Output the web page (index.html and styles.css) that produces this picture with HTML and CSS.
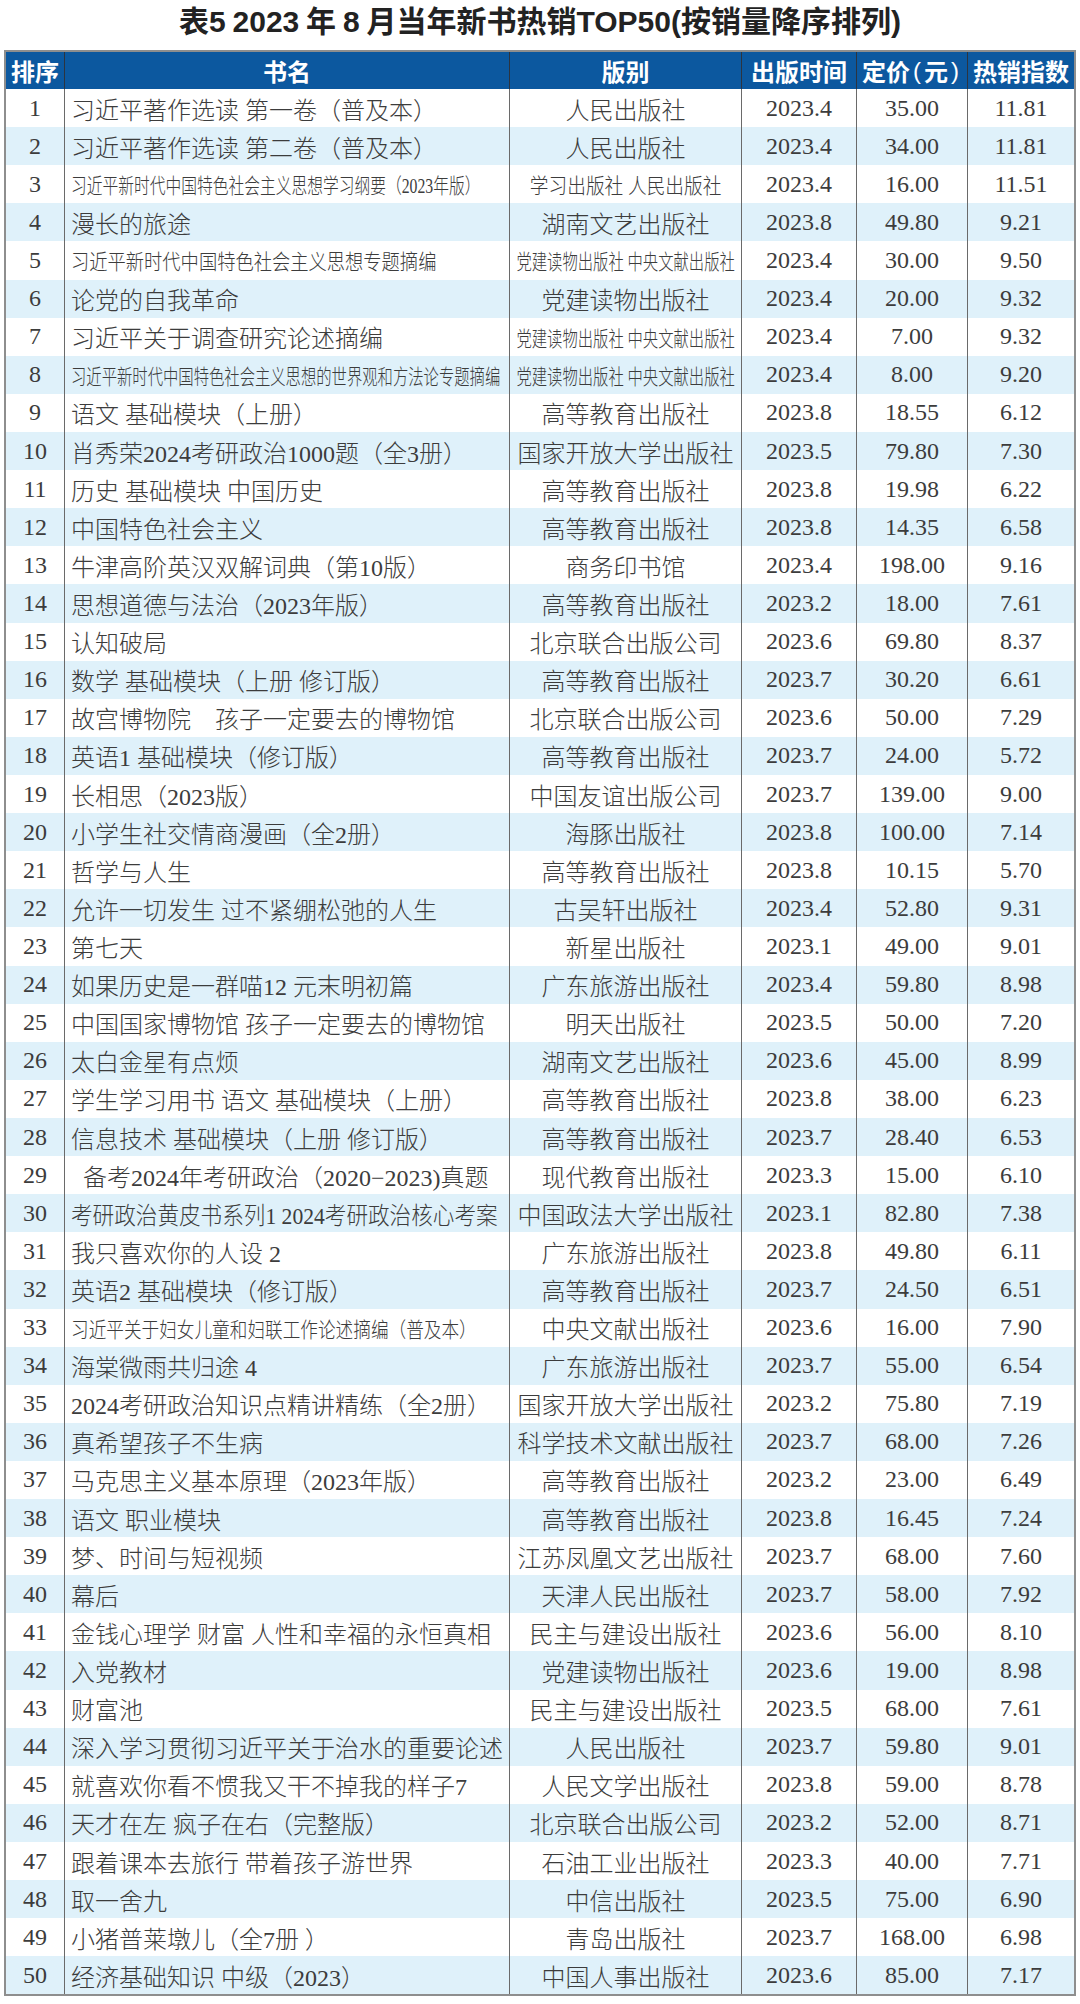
FILE: index.html
```html
<!DOCTYPE html>
<html lang="zh-CN">
<head>
<meta charset="utf-8">
<title>表5 2023年8月当年新书热销TOP50</title>
<link rel="stylesheet" href="styles.css">
</head>
<body>
<div class="title"><span class="ttxt">表<span class="lat">5</span> <span class="lat">2023</span> 年 <span class="lat">8</span> 月当年新书热销<span class="lat">TOP50(</span>按销量降序排列<span class="lat">)</span></span></div>
<div class="tbl">
  <div class="row hd"><div class="c">排序</div><div class="c">书名</div><div class="c">版别</div><div class="c">出版时间</div><div class="c">定价<span class="par">(</span>元<span class="par">)</span></div><div class="c">热销指数</div></div>
  <div class="row"><div class="c">1</div><div class="c name">习近平著作选读 第一卷（普及本）</div><div class="c">人民出版社</div><div class="c">2023.4</div><div class="c">35.00</div><div class="c">11.81</div></div>
  <div class="row alt"><div class="c">2</div><div class="c name">习近平著作选读 第二卷（普及本）</div><div class="c">人民出版社</div><div class="c">2023.4</div><div class="c">34.00</div><div class="c">11.81</div></div>
  <div class="row"><div class="c">3</div><div class="c name"><span class="sq k74 ol">习近平新时代中国特色社会主义思想学习纲要（2023年版）</span></div><div class="c"><span class="sq k89">学习出版社 人民出版社</span></div><div class="c">2023.4</div><div class="c">16.00</div><div class="c">11.51</div></div>
  <div class="row alt"><div class="c">4</div><div class="c name">漫长的旅途</div><div class="c">湖南文艺出版社</div><div class="c">2023.8</div><div class="c">49.80</div><div class="c">9.21</div></div>
  <div class="row"><div class="c">5</div><div class="c name"><span class="sq k87 ol">习近平新时代中国特色社会主义思想专题摘编</span></div><div class="c"><span class="sq k73">党建读物出版社 中央文献出版社</span></div><div class="c">2023.4</div><div class="c">30.00</div><div class="c">9.50</div></div>
  <div class="row alt"><div class="c">6</div><div class="c name">论党的自我革命</div><div class="c">党建读物出版社</div><div class="c">2023.4</div><div class="c">20.00</div><div class="c">9.32</div></div>
  <div class="row"><div class="c">7</div><div class="c name">习近平关于调查研究论述摘编</div><div class="c"><span class="sq k73">党建读物出版社 中央文献出版社</span></div><div class="c">2023.4</div><div class="c">7.00</div><div class="c">9.32</div></div>
  <div class="row alt"><div class="c">8</div><div class="c name"><span class="sq k73 ol">习近平新时代中国特色社会主义思想的世界观和方法论专题摘编</span></div><div class="c"><span class="sq k73">党建读物出版社 中央文献出版社</span></div><div class="c">2023.4</div><div class="c">8.00</div><div class="c">9.20</div></div>
  <div class="row"><div class="c">9</div><div class="c name">语文 基础模块（上册）</div><div class="c">高等教育出版社</div><div class="c">2023.8</div><div class="c">18.55</div><div class="c">6.12</div></div>
  <div class="row alt"><div class="c">10</div><div class="c name">肖秀荣2024考研政治1000题（全3册）</div><div class="c">国家开放大学出版社</div><div class="c">2023.5</div><div class="c">79.80</div><div class="c">7.30</div></div>
  <div class="row"><div class="c">11</div><div class="c name">历史 基础模块 中国历史</div><div class="c">高等教育出版社</div><div class="c">2023.8</div><div class="c">19.98</div><div class="c">6.22</div></div>
  <div class="row alt"><div class="c">12</div><div class="c name">中国特色社会主义</div><div class="c">高等教育出版社</div><div class="c">2023.8</div><div class="c">14.35</div><div class="c">6.58</div></div>
  <div class="row"><div class="c">13</div><div class="c name">牛津高阶英汉双解词典（第10版）</div><div class="c">商务印书馆</div><div class="c">2023.4</div><div class="c">198.00</div><div class="c">9.16</div></div>
  <div class="row alt"><div class="c">14</div><div class="c name">思想道德与法治（2023年版）</div><div class="c">高等教育出版社</div><div class="c">2023.2</div><div class="c">18.00</div><div class="c">7.61</div></div>
  <div class="row"><div class="c">15</div><div class="c name">认知破局</div><div class="c">北京联合出版公司</div><div class="c">2023.6</div><div class="c">69.80</div><div class="c">8.37</div></div>
  <div class="row alt"><div class="c">16</div><div class="c name">数学 基础模块（上册 修订版）</div><div class="c">高等教育出版社</div><div class="c">2023.7</div><div class="c">30.20</div><div class="c">6.61</div></div>
  <div class="row"><div class="c">17</div><div class="c name">故宫博物院　孩子一定要去的博物馆</div><div class="c">北京联合出版公司</div><div class="c">2023.6</div><div class="c">50.00</div><div class="c">7.29</div></div>
  <div class="row alt"><div class="c">18</div><div class="c name">英语1 基础模块（修订版）</div><div class="c">高等教育出版社</div><div class="c">2023.7</div><div class="c">24.00</div><div class="c">5.72</div></div>
  <div class="row"><div class="c">19</div><div class="c name">长相思（2023版）</div><div class="c">中国友谊出版公司</div><div class="c">2023.7</div><div class="c">139.00</div><div class="c">9.00</div></div>
  <div class="row alt"><div class="c">20</div><div class="c name">小学生社交情商漫画（全2册）</div><div class="c">海豚出版社</div><div class="c">2023.8</div><div class="c">100.00</div><div class="c">7.14</div></div>
  <div class="row"><div class="c">21</div><div class="c name">哲学与人生</div><div class="c">高等教育出版社</div><div class="c">2023.8</div><div class="c">10.15</div><div class="c">5.70</div></div>
  <div class="row alt"><div class="c">22</div><div class="c name">允许一切发生 过不紧绷松弛的人生</div><div class="c">古吴轩出版社</div><div class="c">2023.4</div><div class="c">52.80</div><div class="c">9.31</div></div>
  <div class="row"><div class="c">23</div><div class="c name">第七天</div><div class="c">新星出版社</div><div class="c">2023.1</div><div class="c">49.00</div><div class="c">9.01</div></div>
  <div class="row alt"><div class="c">24</div><div class="c name">如果历史是一群喵12 元末明初篇</div><div class="c">广东旅游出版社</div><div class="c">2023.4</div><div class="c">59.80</div><div class="c">8.98</div></div>
  <div class="row"><div class="c">25</div><div class="c name">中国国家博物馆 孩子一定要去的博物馆</div><div class="c">明天出版社</div><div class="c">2023.5</div><div class="c">50.00</div><div class="c">7.20</div></div>
  <div class="row alt"><div class="c">26</div><div class="c name">太白金星有点烦</div><div class="c">湖南文艺出版社</div><div class="c">2023.6</div><div class="c">45.00</div><div class="c">8.99</div></div>
  <div class="row"><div class="c">27</div><div class="c name">学生学习用书 语文 基础模块（上册）</div><div class="c">高等教育出版社</div><div class="c">2023.8</div><div class="c">38.00</div><div class="c">6.23</div></div>
  <div class="row alt"><div class="c">28</div><div class="c name">信息技术 基础模块（上册 修订版）</div><div class="c">高等教育出版社</div><div class="c">2023.7</div><div class="c">28.40</div><div class="c">6.53</div></div>
  <div class="row"><div class="c">29</div><div class="c name indent">备考2024年考研政治（2020−2023)真题</div><div class="c">现代教育出版社</div><div class="c">2023.3</div><div class="c">15.00</div><div class="c">6.10</div></div>
  <div class="row alt"><div class="c">30</div><div class="c name"><span class="sq k90 ol big">考研政治黄皮书系列1 2024考研政治核心考案</span></div><div class="c">中国政法大学出版社</div><div class="c">2023.1</div><div class="c">82.80</div><div class="c">7.38</div></div>
  <div class="row"><div class="c">31</div><div class="c name">我只喜欢你的人设 2</div><div class="c">广东旅游出版社</div><div class="c">2023.8</div><div class="c">49.80</div><div class="c">6.11</div></div>
  <div class="row alt"><div class="c">32</div><div class="c name">英语2 基础模块（修订版）</div><div class="c">高等教育出版社</div><div class="c">2023.7</div><div class="c">24.50</div><div class="c">6.51</div></div>
  <div class="row"><div class="c">33</div><div class="c name"><span class="sq k84 ol">习近平关于妇女儿童和妇联工作论述摘编（普及本）</span></div><div class="c">中央文献出版社</div><div class="c">2023.6</div><div class="c">16.00</div><div class="c">7.90</div></div>
  <div class="row alt"><div class="c">34</div><div class="c name">海棠微雨共归途 4</div><div class="c">广东旅游出版社</div><div class="c">2023.7</div><div class="c">55.00</div><div class="c">6.54</div></div>
  <div class="row"><div class="c">35</div><div class="c name">2024考研政治知识点精讲精练（全2册）</div><div class="c">国家开放大学出版社</div><div class="c">2023.2</div><div class="c">75.80</div><div class="c">7.19</div></div>
  <div class="row alt"><div class="c">36</div><div class="c name">真希望孩子不生病</div><div class="c">科学技术文献出版社</div><div class="c">2023.7</div><div class="c">68.00</div><div class="c">7.26</div></div>
  <div class="row"><div class="c">37</div><div class="c name">马克思主义基本原理（2023年版）</div><div class="c">高等教育出版社</div><div class="c">2023.2</div><div class="c">23.00</div><div class="c">6.49</div></div>
  <div class="row alt"><div class="c">38</div><div class="c name">语文 职业模块</div><div class="c">高等教育出版社</div><div class="c">2023.8</div><div class="c">16.45</div><div class="c">7.24</div></div>
  <div class="row"><div class="c">39</div><div class="c name">梦、时间与短视频</div><div class="c">江苏凤凰文艺出版社</div><div class="c">2023.7</div><div class="c">68.00</div><div class="c">7.60</div></div>
  <div class="row alt"><div class="c">40</div><div class="c name">幕后</div><div class="c">天津人民出版社</div><div class="c">2023.7</div><div class="c">58.00</div><div class="c">7.92</div></div>
  <div class="row"><div class="c">41</div><div class="c name">金钱心理学 财富 人性和幸福的永恒真相</div><div class="c">民主与建设出版社</div><div class="c">2023.6</div><div class="c">56.00</div><div class="c">8.10</div></div>
  <div class="row alt"><div class="c">42</div><div class="c name">入党教材</div><div class="c">党建读物出版社</div><div class="c">2023.6</div><div class="c">19.00</div><div class="c">8.98</div></div>
  <div class="row"><div class="c">43</div><div class="c name">财富池</div><div class="c">民主与建设出版社</div><div class="c">2023.5</div><div class="c">68.00</div><div class="c">7.61</div></div>
  <div class="row alt"><div class="c">44</div><div class="c name">深入学习贯彻习近平关于治水的重要论述</div><div class="c">人民出版社</div><div class="c">2023.7</div><div class="c">59.80</div><div class="c">9.01</div></div>
  <div class="row"><div class="c">45</div><div class="c name">就喜欢你看不惯我又干不掉我的样子7</div><div class="c">人民文学出版社</div><div class="c">2023.8</div><div class="c">59.00</div><div class="c">8.78</div></div>
  <div class="row alt"><div class="c">46</div><div class="c name">天才在左 疯子在右（完整版）</div><div class="c">北京联合出版公司</div><div class="c">2023.2</div><div class="c">52.00</div><div class="c">8.71</div></div>
  <div class="row"><div class="c">47</div><div class="c name">跟着课本去旅行 带着孩子游世界</div><div class="c">石油工业出版社</div><div class="c">2023.3</div><div class="c">40.00</div><div class="c">7.71</div></div>
  <div class="row alt"><div class="c">48</div><div class="c name">取一舍九</div><div class="c">中信出版社</div><div class="c">2023.5</div><div class="c">75.00</div><div class="c">6.90</div></div>
  <div class="row"><div class="c">49</div><div class="c name">小猪普莱墩儿（全7册 ）</div><div class="c">青岛出版社</div><div class="c">2023.7</div><div class="c">168.00</div><div class="c">6.98</div></div>
  <div class="row alt"><div class="c">50</div><div class="c name">经济基础知识 中级（2023）</div><div class="c">中国人事出版社</div><div class="c">2023.6</div><div class="c">85.00</div><div class="c">7.17</div></div>
</div>
</body>
</html>
```

FILE: styles.css
```css
html, body {
  margin: 0;
  padding: 0;
  background: #ffffff;
}

.title {
  box-sizing: border-box;
  height: 50px;
  padding-bottom: 12px;
  display: flex;
  align-items: center;
  justify-content: center;
  font-family: "Noto Sans CJK SC", sans-serif;
  font-weight: 700;
  font-size: 30px;
  color: #222222;
  white-space: pre;
}

.title .lat {
  font-family: "Liberation Sans Narrow", "Liberation Sans", sans-serif;
  font-weight: 700;
}

.tbl {
  box-sizing: border-box;
  margin-left: 4px;
  width: 1072px;
  border: 2px solid #8e8e8e;
  font-family: "Liberation Serif", "Noto Sans CJK SC", serif;
  font-weight: 300;
  font-size: 24px;
  color: #3c3c3c;
}

.row {
  display: grid;
  grid-template-columns: 58px 445px 232px 115px 111px 107px;
  height: 38.12px;
  background: #ffffff;
}

.row.alt {
  background: #dff1fa;
}

.row.hd {
  height: 37px;
  background: #0c589f;
  color: #ffffff;
  font-family: "Noto Sans CJK SC", sans-serif;
  font-weight: 700;
  font-size: 24px;
}

.c {
  box-sizing: border-box;
  display: flex;
  align-items: center;
  justify-content: center;
  white-space: nowrap;
  min-width: 0;
}

.c + .c {
  border-left: 1.5px solid #6a6a6a;
}

.row.hd .c + .c {
  border-left: 1.5px solid #2c3440;
}

.hd .par {
  font-family: "Liberation Sans", sans-serif;
  font-weight: 400;
  margin: 0 3px;
}

.name {
  justify-content: flex-start;
  padding-left: 6px;
}

.name.indent {
  padding-left: 18px;
}

.sq {
  display: inline-block;
  font-size: 21px;
  transform-origin: center center;
}

.sq.ol {
  transform-origin: left center;
}

.sq.big {
  font-size: 24px;
}

.k73 { transform: scaleX(0.73); }
.k74 { transform: scaleX(0.75); }
.k84 { transform: scaleX(0.84); }
.k87 { transform: scaleX(0.87); }
.k89 { transform: scaleX(0.89); }
.k90 { transform: scaleX(0.90); }
```
